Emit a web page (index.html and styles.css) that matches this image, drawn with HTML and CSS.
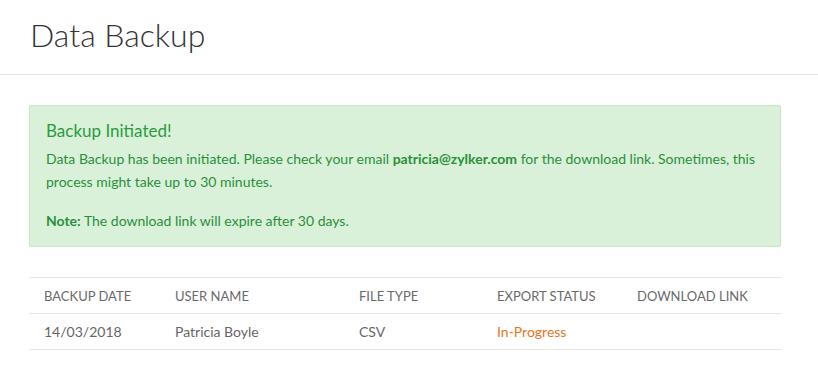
FILE: index.html
```html
<!DOCTYPE html>
<html lang="en">
<head>
    <meta charset="UTF-8">
    <meta name="viewport" content="width=device-width, initial-scale=1.0">
    <title>Data Backup</title>
    <link rel="stylesheet" href="styles.css">
</head>
<body>

    <div class="page-header">
        <h1>Data Backup</h1>
    </div>

    <div class="content">
        <div class="alert-success">
            <h4>Backup Initiated!</h4>
            <p>Data Backup has been initiated. Please check your email <b>patricia@zylker.com</b> for the download link. Sometimes, this process might take up to 30 minutes.</p>
            <p class="note"><b>Note:</b> The download link will expire after 30 days.</p>
        </div>

        <table class="backup-table">
            <thead>
                <tr>
                    <th class="col-date">Backup Date</th>
                    <th class="col-user">User Name</th>
                    <th class="col-type">File Type</th>
                    <th class="col-status">Export Status</th>
                    <th>Download Link</th>
                </tr>
            </thead>
            <tbody>
                <tr>
                    <td>14/03/2018</td>
                    <td>Patricia Boyle</td>
                    <td>CSV</td>
                    <td class="in-progress">In-Progress</td>
                    <td></td>
                </tr>
            </tbody>
        </table>
    </div>

</body>
</html>
```

FILE: styles.css
```css
/* Reset */
* {
    margin: 0;
    padding: 0;
    box-sizing: border-box;
}

body {
    font-family: 'Lato', 'Open Sans', sans-serif;
    background: #fff;
    color: #333;
}

/* Header */
.page-header {
    height: 75px;
    padding: 16px 30px 0;
    border-bottom: 1px solid #e6e6e6;
}

.page-header h1 {
    font-size: 32px;
    font-weight: 300;
    line-height: 38px;
    color: #333;
}

.content {
    padding: 30px 37px 0 29px;
}

/* Alert */
.alert-success {
    background-color: #d9f1d8;
    border: 1px solid #c7e6c4;
    border-radius: 2px;
    padding: 13px 16px 14px;
    color: #2a8f3c;
    font-size: 14px;
    line-height: 23px;
}

.alert-success h4 {
    font-size: 17px;
    font-weight: 400;
    line-height: 24px;
    color: #2a9b3e;
    margin-bottom: 4px;
}

.alert-success b {
    font-weight: 700;
}

.alert-success .note {
    margin-top: 16px;
}

/* Table */
.backup-table {
    width: 100%;
    margin-top: 30px;
    border-collapse: collapse;
    font-size: 14px;
    color: #666;
}

.backup-table th,
.backup-table td {
    text-align: left;
    padding: 0 15px;
    height: 36px;
    border-top: 1px solid #e6e6e6;
    border-bottom: 1px solid #e6e6e6;
}

.backup-table th {
    font-size: 13px;
    font-weight: 400;
    text-transform: uppercase;
    color: #6a6a6a;
}

.col-date { width: 131px; }
.col-user { width: 184px; }
.col-type { width: 138px; }
.col-status { width: 140px; }

.backup-table .in-progress {
    color: #e8741f;
}
```
